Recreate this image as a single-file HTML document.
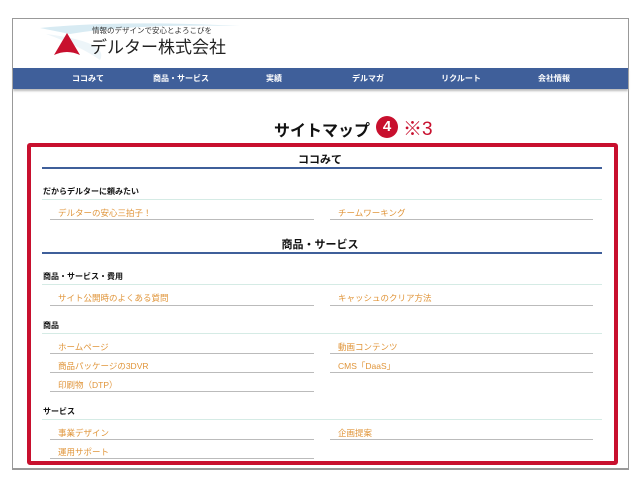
<!DOCTYPE html>
<html><head><meta charset="utf-8"><style>
*{margin:0;padding:0;box-sizing:border-box}
body{width:640px;height:480px;background:#fff;position:relative;overflow:hidden;font-family:"Liberation Sans","Noto Sans CJK JP",sans-serif}
.a{position:absolute;white-space:nowrap}
.frame{left:12px;top:18px;width:617px;height:452px;border:1px solid #999;border-bottom:2px solid #999}
.nav{left:13px;top:68px;width:615px;height:21px;background:#3f5f9a;box-shadow:0 2px 2px #bbb}
.nav span{position:absolute;top:5px;font-size:8px;color:#fff;font-weight:bold;transform:translateX(-50%)}
.red{left:27px;top:143px;width:591px;height:322px;border:4px solid #c8102e;border-radius:3px}
.h{font-size:11px;font-weight:bold;color:#111;left:0;width:640px;text-align:center}
.bl{left:42px;width:560px;height:2px;background:#3f5f9a}
.sh{font-size:8px;font-weight:bold;color:#111;left:43px}
.ll{left:42px;width:560px;height:1px;background:#d5ebe5}
.lk{font-size:8.5px;color:#e0953a}
.u{height:1px;background:#bbb}
</style></head><body>
<div class="a frame"></div>
<svg class="a" style="left:40px;top:22px" width="210" height="40">
<path d="M0 6 Q80 -2 200 4 Q90 2 30 12Z" fill="#d8ebf3"/>
<path d="M6 12 Q70 20 60 38 Q40 24 6 12Z" fill="#e5f1f6" opacity=".7"/>
<path d="M27 11 L14 33 Q27 27 40 33Z" fill="#c8102e"/>
</svg>
<div class="a" style="left:92px;top:25px;font-size:7.5px;color:#333">情報のデザインで安心とよろこびを</div>
<div class="a" style="left:90px;top:33px;font-size:17px;color:#222">デルター株式会社</div>
<div class="a nav">
<span style="left:75px">ココみて</span><span style="left:168px">商品・サービス</span><span style="left:261px">実績</span><span style="left:355px">デルマガ</span><span style="left:448px">リクルート</span><span style="left:541px">会社情報</span>
</div>
<div class="a" style="left:274px;top:117px;font-size:16px;font-weight:bold;color:#111">サイトマップ</div>
<div class="a" style="left:376px;top:116px;width:22px;height:22px;border-radius:50%;background:#c8102e;color:#fff;font-weight:bold;font-size:15px;text-align:center;line-height:22px">4</div>
<div class="a" style="left:403px;top:114px;font-size:19px;color:#c8102e">※3</div>
<div class="a red"></div>
<div class="a h" style="top:151px">ココみて</div>
<div class="a bl" style="top:167px"></div>
<div class="a sh" style="top:186px">だからデルターに頼みたい</div>
<div class="a ll" style="top:199px"></div>
<div class="a lk" style="left:58px;top:207px">デルターの安心三拍子！</div>
<div class="a lk" style="left:338px;top:207px">チームワーキング</div>
<div class="a u" style="left:50px;width:264px;top:219px"></div>
<div class="a u" style="left:330px;width:263px;top:219px"></div>
<div class="a h" style="top:236px">商品・サービス</div>
<div class="a bl" style="top:252px"></div>
<div class="a sh" style="top:271px">商品・サービス・費用</div>
<div class="a ll" style="top:284px"></div>
<div class="a lk" style="left:58px;top:292px">サイト公開時のよくある質問</div>
<div class="a lk" style="left:338px;top:292px">キャッシュのクリア方法</div>
<div class="a u" style="left:50px;width:264px;top:305px"></div>
<div class="a u" style="left:330px;width:263px;top:305px"></div>
<div class="a sh" style="top:320px">商品</div>
<div class="a ll" style="top:333px"></div>
<div class="a lk" style="left:58px;top:341px">ホームページ</div>
<div class="a lk" style="left:338px;top:341px">動画コンテンツ</div>
<div class="a u" style="left:50px;width:264px;top:353px"></div>
<div class="a u" style="left:330px;width:263px;top:353px"></div>
<div class="a lk" style="left:58px;top:360px">商品パッケージの3DVR</div>
<div class="a lk" style="left:338px;top:360px">CMS「DaaS」</div>
<div class="a u" style="left:50px;width:264px;top:372px"></div>
<div class="a u" style="left:330px;width:263px;top:372px"></div>
<div class="a lk" style="left:58px;top:379px">印刷物（DTP）</div>
<div class="a u" style="left:50px;width:264px;top:391px"></div>
<div class="a sh" style="top:406px">サービス</div>
<div class="a ll" style="top:419px"></div>
<div class="a lk" style="left:58px;top:427px">事業デザイン</div>
<div class="a lk" style="left:338px;top:427px">企画提案</div>
<div class="a u" style="left:50px;width:264px;top:439px"></div>
<div class="a u" style="left:330px;width:263px;top:439px"></div>
<div class="a lk" style="left:58px;top:446px">運用サポート</div>
<div class="a u" style="left:50px;width:264px;top:458px"></div>
</body></html>
